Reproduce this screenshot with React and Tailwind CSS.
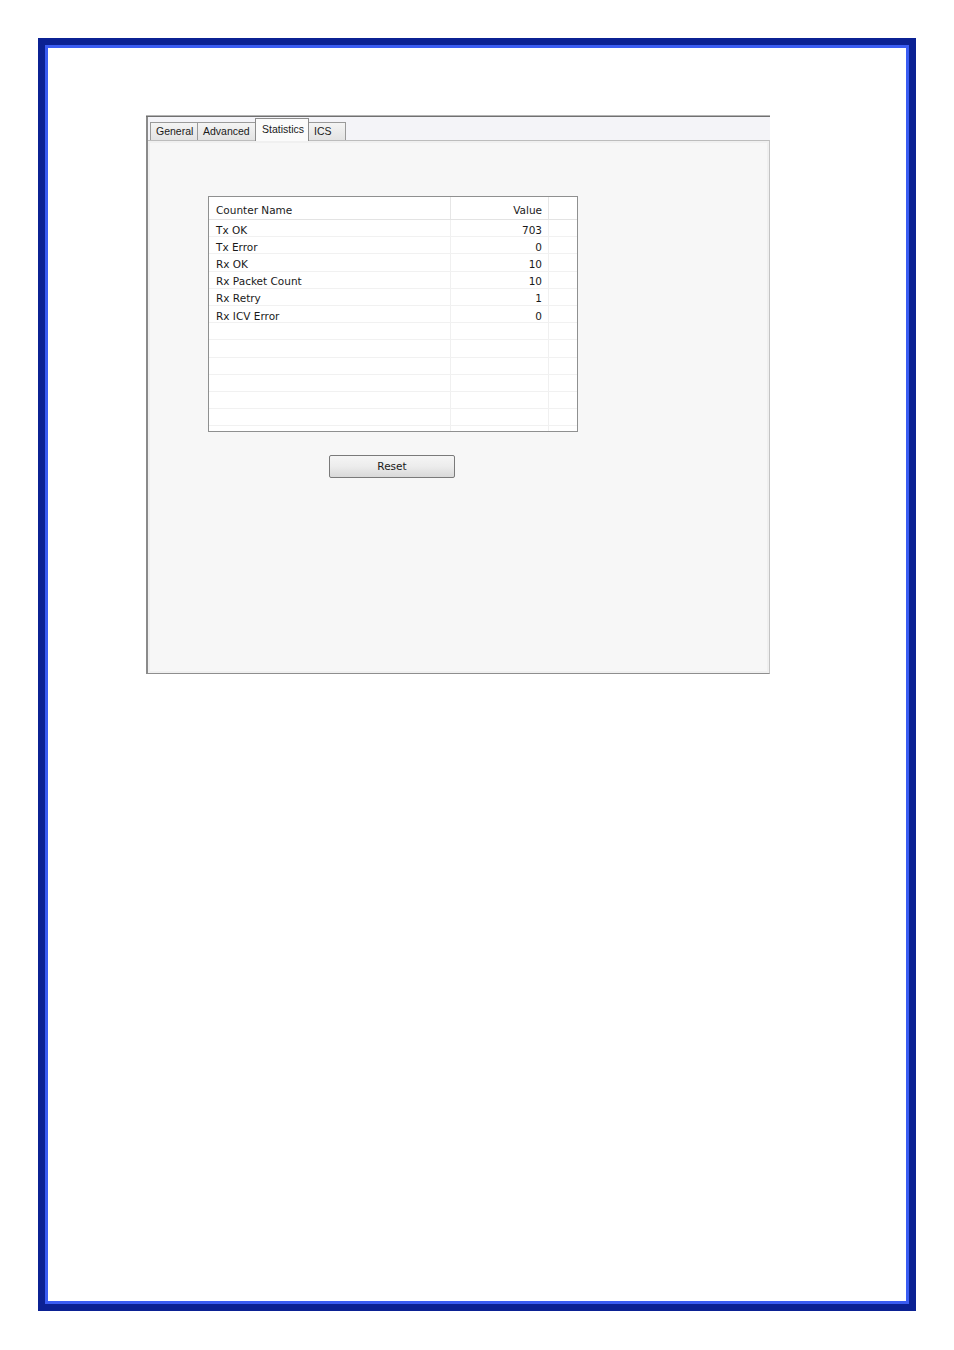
import React from "react";

const rows = [
  ["Tx OK", "703"],
  ["Tx Error", "0"],
  ["Rx OK", "10"],
  ["Rx Packet Count", "10"],
  ["Rx Retry", "1"],
  ["Rx ICV Error", "0"],
  ["", ""], ["", ""], ["", ""], ["", ""], ["", ""], ["", ""], ["", ""],
];

const dv = { fontFamily: '"DejaVu Sans", Verdana, sans-serif' };
const ls = { fontFamily: '"Liberation Sans", Arial, sans-serif' };

function Tab({ label, w, active, pl }) {
  if (active) {
    return (
      <div
        className={`relative z-10 -mb-px flex h-[23px] items-start border border-b-0 border-[#8c8c8c] bg-[#fbfbfb] pt-[3px] text-[10.5px] text-[#1a1a1a] ${w} ${pl}`}
        style={ls}
      >
        {label}
      </div>
    );
  }
  return (
    <div
      className={`flex h-[18px] items-center border border-b-0 border-r-0 border-[#9a9a9a] bg-gradient-to-b from-[#f4f4f4] to-[#e3e3e3] pt-[1px] text-[10.5px] text-[#1a1a1a] ${w} ${pl}`}
      style={ls}
    >
      {label}
    </div>
  );
}

export default function App() {
  return (
    <div className="min-h-[1350px] w-[954px] bg-white pl-[38px] pt-[38px]">
      <div className="flex h-[1273px] w-[878px] border-[7px] border-[#0b2193]">
        <div className="flex-1 border-[3px] border-[#3a5cf2] bg-white pl-[98px] pt-[67px]">
          {/* dialog */}
          <div className="flex h-[559px] w-[624px] flex-col">
            <div className="h-px bg-[#b4b4b4]" />
            <div className="h-px bg-[#707070]" />
            <div className="flex flex-1 flex-col border-l-2 border-[#8a8a8a]">
              {/* tab strip */}
              <div className="flex h-[23px] items-end bg-[#f4f4f8] pl-[2px]">
                <Tab label="General" w="w-[47px]" pl="pl-[5px]" />
                <Tab label="Advanced" w="w-[58px]" pl="pl-[5px]" />
                <Tab label="Statistics" w="w-[54px]" pl="pl-[6px]" active />
                <div
                  className="flex h-[18px] w-[37px] items-center border border-b-0 border-l-0 border-[#9a9a9a] bg-gradient-to-b from-[#f4f4f4] to-[#e3e3e3] pl-[5px] pt-[1px] text-[10.5px] text-[#1a1a1a]"
                  style={ls}
                >
                  ICS
                </div>
              </div>
              {/* panel */}
              <div className="flex flex-1 flex-col border-b border-r border-t border-b-[#8e8e8e] border-r-[#c4c4c4] border-t-[#bdbdbd] bg-[#f0f0f0] p-[2px]">
                <div className="flex flex-1 flex-col bg-[#f7f7f7] pl-[58px] pt-[53px]">
                  {/* table */}
                  <div className="flex h-[236px] w-[370px] flex-col overflow-hidden border border-[#8f9090] bg-white text-[10.5px] text-[#1a1a1a]" style={dv}>
                    <div className="flex h-[23px] shrink-0 border-b border-[#e3e3e3]">
                      <div className="flex w-[242px] items-center border-r border-[#e6e6e6] pl-[7px] pt-[5px]">Counter Name</div>
                      <div className="flex w-[98px] items-center justify-end border-r border-[#e6e6e6] pr-[6px] pt-[5px]">Value</div>
                      <div className="flex-1" />
                    </div>
                    {rows.map(([n, v], i) => (
                      <div key={i} className="flex h-[17.2px] shrink-0 border-b border-[#f1f1f1]">
                        <div className="flex w-[242px] items-center border-r border-[#f0f0f0] pl-[7px] pt-[5px]">{n}</div>
                        <div className="flex w-[98px] items-center justify-end border-r border-[#f0f0f0] pr-[6px] pt-[5px]">{v}</div>
                        <div className="flex-1" />
                      </div>
                    ))}
                  </div>
                  {/* reset */}
                  <div className="ml-[121px] mt-[23px]">
                    <button
                      className="flex h-[23px] w-[126px] items-center justify-center rounded-[2px] border border-[#7a7a7a] bg-gradient-to-b from-[#f5f5f5] via-[#ececec] to-[#d9d9d9] text-[10.5px] text-[#1a1a1a]"
                      style={dv}
                    >
                      Reset
                    </button>
                  </div>
                </div>
              </div>
            </div>
          </div>
        </div>
      </div>
    </div>
  );
}
